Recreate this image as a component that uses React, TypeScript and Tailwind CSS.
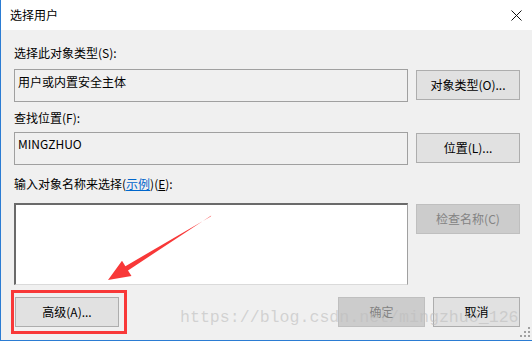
import React from "react";

const font = { fontFamily: '"Segoe UI", "Noto Sans CJK SC", "Noto Sans", sans-serif' };

function Btn({ label, disabled, className = "" }: { label: string; disabled?: boolean; className?: string }) {
  return (
    <div
      className={
        "flex items-center justify-center h-[30px] border text-[12px] leading-[16px] " +
        (disabled
          ? "bg-[#cccccc] border-[#bfbfbf] text-[#838383] "
          : "bg-[#e1e1e1] border-[#adadad] text-black ") +
        className
      }
    >
      {label}
    </div>
  );
}

export default function App() {
  return (
    <div
      className="relative w-[532px] h-[341px] flex flex-col border-l border-b border-[#2b7cd3] overflow-hidden text-[12px] leading-[16px] text-black"
      style={font}
    >
      {/* Title bar */}
      <div className="flex items-center justify-between h-[30px] shrink-0 bg-white pl-[9px] pr-[9px]">
        <span>选择用户</span>
        <svg width="11" height="11" viewBox="0 0 11 11" className="mr-[1px]">
          <path d="M0.5 0.5 L10.5 10.5 M10.5 0.5 L0.5 10.5" stroke="#111" strokeWidth="1" />
        </svg>
      </div>

      {/* Body */}
      <div className="flex-1 bg-[#f0f0f0] pl-[13px] pt-[15px]">
        <div>选择此对象类型(S):</div>
        <div className="flex mt-[8px]">
          <div className="w-[394px] h-[33px] border border-[#a0a0a0] pl-[3px] pt-[4px]">用户或内置安全主体</div>
          <Btn label="对象类型(O)..." className="w-[104px] ml-[8px] mt-[1px]" />
        </div>

        <div className="mt-[8px]">查找位置(F):</div>
        <div className="flex mt-[6px]">
          <div className="w-[394px] h-[33px] border border-[#a0a0a0] pl-[3px] pt-[3px]">MINGZHUO</div>
          <Btn label="位置(L)..." className="w-[104px] ml-[8px] mt-[1px]" />
        </div>

        <div className="mt-[11px]">
          输入对象名称来选择(<span className="text-[#0066cc] underline">示例</span>)(<span className="underline">E</span>):
        </div>
        <div className="flex mt-[11px]">
          <div className="w-[394px] h-[82px] bg-white border-t-2 border-l-2 border-r border-b border-t-[#6a6a6a] border-l-[#6a6a6a] border-r-[#a0a0a0] border-b-[#dadada]" />
          <Btn label="检查名称(C)" disabled className="w-[104px] ml-[8px] mt-[1px]" />
        </div>

        <div className="flex mt-[12px]">
          <div className="relative">
            <Btn label="高级(A)..." className="w-[104px] ml-[1px]" />
            <div className="absolute left-[-3px] top-[-7px] w-[116px] h-[44px] border-[3px] border-[#f83838]" />
          </div>
          <Btn label="确定" disabled className="w-[87px] ml-[219px]" />
          <Btn label="取消" className="w-[87px] ml-[8px]" />
        </div>
      </div>

      {/* Red arrow */}
      <svg className="absolute left-0 top-0 pointer-events-none" width="532" height="341">
        <polygon
          points="210.3,215.6 209.7,216.4 124.4,266.2 121,260.7 107,280 130.5,276 127,270.4"
          fill="#f83838"
        />
      </svg>

      {/* Watermark */}
      <div
        className="absolute left-[179px] top-[308px] text-[16.6px] leading-[20px] text-[#bdbdbd]/60 pointer-events-none"
        style={{ fontFamily: '"Liberation Mono", monospace' }}
      >
        https://blog.csdn.net/mingzhuo_126
      </div>

      {/* Resize grip */}
      <svg className="absolute right-[2px] bottom-[3px]" width="10" height="10" viewBox="0 0 10 10">
        <rect x="8" y="0" width="2" height="2" fill="#a0a0a0" />
        <rect x="4" y="4" width="2" height="2" fill="#a0a0a0" />
        <rect x="8" y="4" width="2" height="2" fill="#a0a0a0" />
        <rect x="0" y="8" width="2" height="2" fill="#a0a0a0" />
        <rect x="4" y="8" width="2" height="2" fill="#a0a0a0" />
        <rect x="8" y="8" width="2" height="2" fill="#a0a0a0" />
      </svg>
    </div>
  );
}
